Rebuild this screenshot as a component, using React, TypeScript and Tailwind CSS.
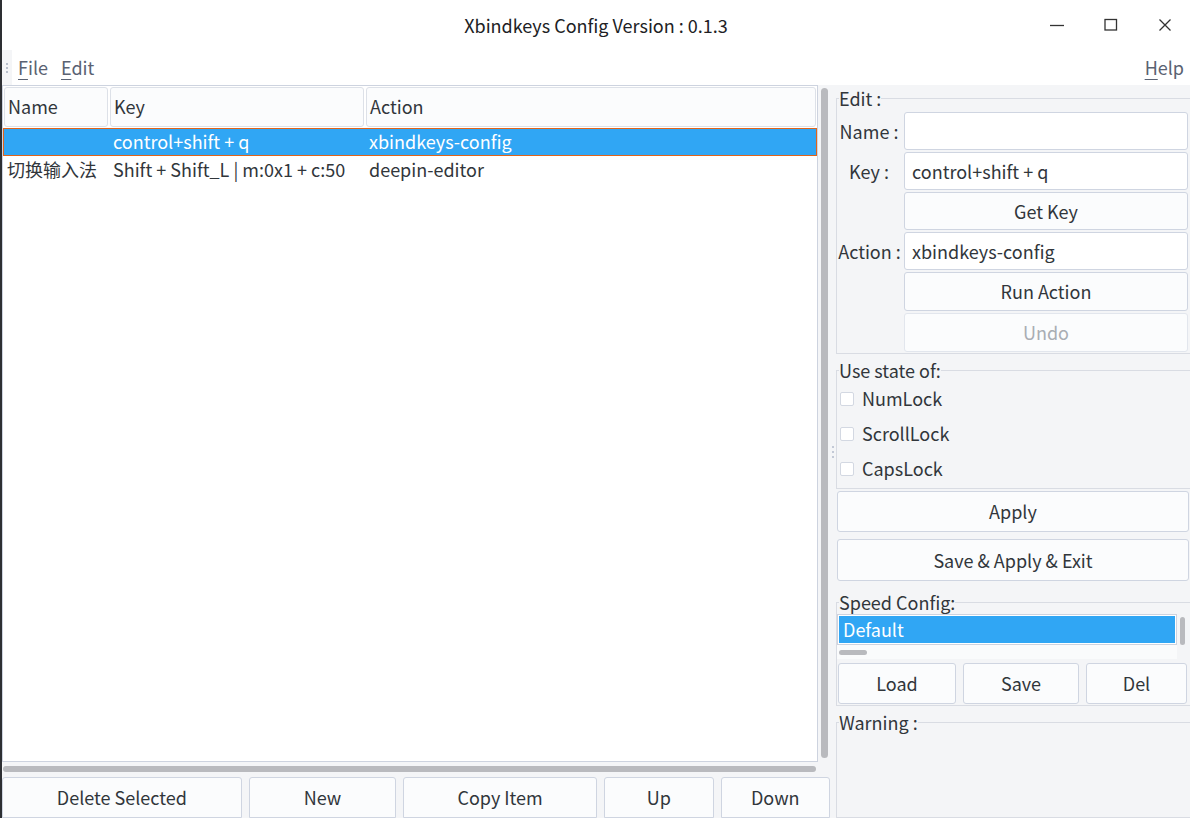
import React from "react";

const FONT = { fontFamily: '"Noto Sans CJK SC", "Noto Sans", sans-serif' };

const rows = [
  { name: "", key: "control+shift + q", action: "xbindkeys-config", selected: true },
  { name: "切换输入法", key: "Shift + Shift_L | m:0x1 + c:50", action: "deepin-editor", selected: false },
];

function Btn({ children, className = "", disabled = false }: { children: React.ReactNode; className?: string; disabled?: boolean }) {
  return (
    <div
      className={`flex items-center justify-center rounded-[3px] border border-[#cfd5e1] bg-[#fbfcfd] ${
        disabled ? "text-[#a9adb3]" : "text-[#31363b]"
      } ${className}`}
    >
      {children}
    </div>
  );
}

function Field({ value }: { value: string }) {
  return (
    <div className="flex h-[38px] items-center rounded-[3px] border border-[#cfd5e1] bg-white px-[7px] text-[#31363b]">
      {value}
    </div>
  );
}

function Group({ title, className = "", children }: { title: string; className?: string; children?: React.ReactNode }) {
  return (
    <fieldset className={`border border-[#d9dce3] ${className}`}>
      <legend className="ml-[2px] leading-[20px] text-[#31363b]">{title}</legend>
      {children}
    </fieldset>
  );
}

function Check({ label }: { label: string }) {
  return (
    <div className="flex h-[35px] items-center gap-[8px] pl-[3px]">
      <div className="h-[14px] w-[14px] rounded-[2px] border border-[#d3d8e2] bg-white" />
      <span className="text-[#31363b]">{label}</span>
    </div>
  );
}

export default function App() {
  return (
    <div className="flex h-[818px] w-[1190px] flex-col overflow-hidden border-l-2 border-[#2d2f33] bg-white text-[18px]" style={FONT}>
      {/* title bar */}
      <div className="grid h-[50px] shrink-0 grid-cols-[1fr_auto_1fr] items-center">
        <div />
        <div className="text-[18px] text-[#202124]">Xbindkeys Config Version : 0.1.3</div>
        <div className="flex items-center justify-end gap-[38px] pr-[17px] text-[#333]">
          <svg width="16" height="16" viewBox="0 0 16 16">
            <path d="M1 8.5h14" stroke="#333" strokeWidth="1.3" />
          </svg>
          <svg width="16" height="16" viewBox="0 0 16 16">
            <rect x="2" y="2.5" width="11.5" height="10.5" fill="none" stroke="#333" strokeWidth="1.3" />
          </svg>
          <svg width="16" height="16" viewBox="0 0 16 16">
            <path d="M2.5 2.5l11 11M13.5 2.5l-11 11" stroke="#333" strokeWidth="1.3" />
          </svg>
        </div>
      </div>

      {/* menu bar */}
      <div className="flex h-[35px] shrink-0 items-center text-[#5a6272]">
        <div className="flex h-full w-[10px] flex-col items-center justify-center gap-[2px] bg-[#f4f5f7]">
          <div className="h-[2px] w-[2px] bg-[#b8bfcc]" />
          <div className="h-[2px] w-[2px] bg-[#b8bfcc]" />
          <div className="h-[2px] w-[2px] bg-[#b8bfcc]" />
        </div>
        <span className="ml-[6px]"><span className="underline underline-offset-4">F</span>ile</span>
        <span className="ml-[13px]"><span className="underline underline-offset-4">E</span>dit</span>
        <span className="ml-auto mr-[6px]"><span className="underline underline-offset-4">H</span>elp</span>
      </div>

      {/* main */}
      <div className="flex min-h-0 flex-1">
        {/* left */}
        <div className="flex w-[828px] shrink-0 flex-col bg-[#f4f5f7]">
          <div className="flex min-h-0 flex-1">
            <div className="flex w-[816px] flex-col border border-[#cdd3df] bg-white">
              <div className="flex h-[42px] shrink-0 gap-[2px] px-[1px] py-[1px] text-[#31363b]">
                <div className="flex w-[104px] items-center rounded-[3px] border border-[#dde1e8] bg-[#fbfcfd] pl-[3px] pb-[1px]">Name</div>
                <div className="flex w-[254px] items-center rounded-[3px] border border-[#dde1e8] bg-[#fbfcfd] pl-[3px] pb-[1px]">Key</div>
                <div className="flex flex-1 items-center rounded-[3px] border border-[#dde1e8] bg-[#fbfcfd] pl-[3px] pb-[1px]">Action</div>
              </div>
              {rows.map((r) => (
                <div
                  key={r.key}
                  className={`flex h-[28px] shrink-0 items-center pb-[1px] ${
                    r.selected ? "border border-[#e0641a] bg-[#30a6f4] text-white" : "border border-transparent text-[#31363b]"
                  }`}
                >
                  <div className="w-[108px] pl-[3px]">{r.name}</div>
                  <div className="w-[256px] pl-[1px]">{r.key}</div>
                  <div className="flex-1 pl-[1px]">{r.action}</div>
                </div>
              ))}
            </div>
            <div className="flex flex-1 justify-center pt-[3px] pb-[4px]">
              <div className="w-[7px] rounded-full bg-[#b9babe]" />
            </div>
          </div>
          <div className="flex h-[14px] shrink-0 items-center pl-[1px] pr-[14px]">
            <div className="h-[6px] flex-1 rounded-full bg-[#b9babe]" />
          </div>
          <div className="flex h-[42px] shrink-0 gap-[7px] pt-[1px] text-[#31363b]">
            <Btn className="w-[241px] rounded-b-none">Delete Selected</Btn>
            <Btn className="w-[148px] rounded-b-none">New</Btn>
            <Btn className="w-[195px] rounded-b-none">Copy Item</Btn>
            <Btn className="w-[110px] rounded-b-none">Up</Btn>
            <Btn className="w-[110px] rounded-b-none">Down</Btn>
          </div>
        </div>

        {/* splitter */}
        <div className="flex w-[6px] shrink-0 flex-col items-center justify-center gap-[3px] bg-[#f4f5f7]">
          <div className="h-[2px] w-[2px] bg-[#c3c9d6]" />
          <div className="h-[2px] w-[2px] bg-[#c3c9d6]" />
          <div className="h-[2px] w-[2px] bg-[#c3c9d6]" />
        </div>

        {/* right */}
        <div className="flex w-[354px] shrink-0 flex-col bg-[#f4f5f7] pt-[3px] pr-[1px]">
          <Group title="Edit :" className="-mr-[4px] pb-[1px]">
            <div className="mt-[4px] grid grid-cols-[67px_1fr] gap-y-[2px] pr-[4px]">
              <div className="flex items-center justify-center pr-[3px] text-[#31363b]">Name :</div>
              <Field value="" />
              <div className="flex items-center justify-center pr-[3px] text-[#31363b]">Key :</div>
              <Field value="control+shift + q" />
              <div />
              <Btn className="h-[38px]">Get Key</Btn>
              <div className="flex items-center justify-center pr-[2px] text-[#31363b]">Action :</div>
              <Field value="xbindkeys-config" />
              <div />
              <Btn className="h-[39px]">Run Action</Btn>
              <div />
              <Btn className="h-[39px] border-[#e2e6ed]" disabled>Undo</Btn>
            </div>
          </Group>

          <Group title="Use state of:" className="-mr-[4px] mt-[6px]">
            <div className="flex flex-col pt-[1px] pb-[2px]">
              <Check label="NumLock" />
              <Check label="ScrollLock" />
              <Check label="CapsLock" />
            </div>
          </Group>

          <Btn className="mt-[2px] ml-[1px] h-[41px]">Apply</Btn>
          <Btn className="mt-[7px] ml-[1px] h-[42px]">Save &amp; Apply &amp; Exit</Btn>

          <Group title="Speed Config:" className="-mr-[4px] mt-[11px]">
            <div className="flex pt-[2px] pr-[4px]">
              <div className="w-[340px] border border-[#cdd3df] bg-white p-[1px]">
                <div className="flex h-[27px] items-center bg-[#30a6f4] pl-[4px] text-white">Default</div>
              </div>
              <div className="flex flex-1 justify-center pt-[3px]">
                <div className="h-[28px] w-[5px] rounded-full bg-[#b9babe]" />
              </div>
            </div>
            <div className="flex h-[14px] w-[340px] items-center bg-[#fafbfc] pl-[2px]">
              <div className="h-[5px] w-[28px] rounded-full bg-[#b9babe]" />
            </div>
            <div className="mt-[4px] mb-[1px] flex gap-[7px] pl-[1px] pr-[5px]">
              <Btn className="h-[41px] w-[118px]">Load</Btn>
              <Btn className="h-[41px] w-[116px]">Save</Btn>
              <Btn className="h-[41px] flex-1">Del</Btn>
            </div>
          </Group>

          <Group title="Warning :" className="-mr-[4px] mt-[6px] flex-1" />
        </div>
      </div>
    </div>
  );
}
